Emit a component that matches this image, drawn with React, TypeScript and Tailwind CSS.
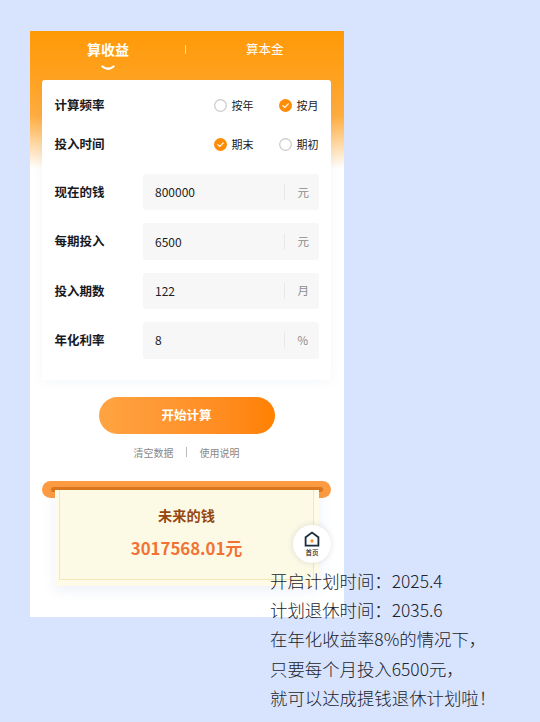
import type { ReactNode } from "react";

const fields = [
  { label: "现在的钱", value: "800000", unit: "元" },
  { label: "每期投入", value: "6500", unit: "元" },
  { label: "投入期数", value: "122", unit: "月" },
  { label: "年化利率", value: "8", unit: "%" },
];

const notes = [
  "开启计划时间：2025.4",
  "计划退休时间：2035.6",
  "在年化收益率8%的情况下，",
  "只要每个月投入6500元，",
  "就可以达成提钱退休计划啦！",
];

function Label({ children }: { children: ReactNode }) {
  return <span className="w-[88px] shrink-0 text-[12.5px] font-bold text-[#17191f]">{children}</span>;
}

function Radio({ label, checked }: { label: string; checked?: boolean }) {
  return (
    <span className="flex items-center gap-[5px] text-[11px] text-[#222]">
      <svg viewBox="0 0 13 13" className="mt-px size-[13px]" fill="none">
        {checked ? (
          <>
            <circle cx="6.5" cy="6.5" r="6.5" fill="#ff8c05" />
            <path d="M3.8 6.7 5.8 8.5 9.3 4.8" stroke="#fff" strokeWidth="1.1" strokeLinecap="round" />
          </>
        ) : (
          <circle cx="6.5" cy="6.5" r="5.8" fill="#fff" stroke="#cacaca" strokeWidth="1.2" />
        )}
      </svg>
      {label}
    </span>
  );
}

function RadioRow({ label, options, active }: { label: string; options: string[]; active: number }) {
  return (
    <div className="flex h-[38.5px] items-center">
      <Label>{label}</Label>
      <div className="ml-auto flex gap-[25px] pb-px">
        {options.map((o, i) => (
          <Radio key={o} label={o} checked={i === active} />
        ))}
      </div>
    </div>
  );
}

function HomeButton() {
  return (
    <div className="absolute top-[494px] left-[263.5px] flex size-[38px] flex-col items-center rounded-full bg-white pt-[6px] shadow-[0_0_6px_rgba(60,70,110,0.16)]">
      <svg viewBox="0 0 16 16" className="size-[16px]" fill="none">
        <path d="M1.6 6.2 8 1.5 14.4 6.2V14.6H1.6Z" stroke="#1b2a3c" strokeWidth="1.8" />
        <rect x="6.6" y="8.6" width="2.8" height="3" rx="0.8" fill="#ff8a20" />
      </svg>
      <span className="mt-px text-[6.5px] leading-[9px] font-medium text-[#222]">首页</span>
    </div>
  );
}

export default function App() {
  return (
    <div className="relative h-[722px] w-[540px] overflow-hidden bg-[#d8e3fe] pt-[31px] pl-[29.5px] font-['Noto_Sans_CJK_SC',sans-serif]">
      <main className="relative flex h-[586px] w-[314px] flex-col overflow-hidden bg-white bg-[linear-gradient(180deg,#ff9906_0px,#ffa323_52px,#ffad40_85px,#ffd7a0_112px,#ffffff_138px)] px-[12.5px]">
        <nav className="flex h-[49px] shrink-0 items-start pt-[8px] text-white">
          <div className="flex w-[132px] flex-col items-center">
            <span className="text-[14px] leading-[20px] font-bold">算收益</span>
            <svg viewBox="0 0 14 6" className="mt-[6px] h-[6px] w-[14px]" fill="none">
              <path d="M1.5 1.5Q7 6 12.5 1.5" stroke="#fff" strokeWidth="2.2" strokeLinecap="round" />
            </svg>
          </div>
          <span className="mt-[6px] ml-[11px] h-[9px] w-px bg-[#ffd797]" />
          <span className="ml-[60px] text-[12.5px] leading-[20px]">算本金</span>
        </nav>

        <section className="h-[300px] shrink-0 rounded-[3px] bg-white px-[12.5px] pt-[6.5px] shadow-[0_2px_12px_rgba(70,100,130,0.06)]">
          <RadioRow label="计算频率" options={["按年", "按月"]} active={1} />
          <RadioRow label="投入时间" options={["期末", "期初"]} active={0} />
          <div className="mt-[10.5px] flex flex-col gap-[13px]">
            {fields.map((f) => (
              <div key={f.label} className="flex h-[36.4px] items-center">
                <Label>{f.label}</Label>
                <div className="flex h-full flex-1 items-center rounded-[3px] bg-[#f7f7f7] pl-[12.5px]">
                  <span className="text-[12px] text-[#222]">{f.value}</span>
                  <span className="ml-auto h-[16px] w-px bg-[#e8e8e8]" />
                  <span className="w-[34px] pl-[13px] text-[11.5px] text-[#8c8c8c]">{f.unit}</span>
                </div>
              </div>
            ))}
          </div>
        </section>

        <button className="mt-[17px] h-[37px] w-[176px] shrink-0 self-center rounded-full bg-linear-to-r from-[#ffa442] to-[#ff8100] text-[12.5px] font-bold text-white">
          开始计算
        </button>

        <div className="mt-[11px] flex h-[14px] shrink-0 items-center justify-center gap-[12.5px] text-[10px] text-[#888]">
          <span>清空数据</span>
          <span className="h-[10px] w-px bg-[#bbb]" />
          <span>使用说明</span>
        </div>

        <section className="mt-[22px]">
          <div className="flex h-[17px] flex-col rounded-full bg-[#fc9b42] px-[8.5px] pt-[6px]">
            <div className="h-[5px] rounded-full bg-[#dc771c]" />
          </div>
          <div className="relative mx-[12.5px] -mt-[8px] h-[96px] bg-[#fffbe8] px-[4.5px] shadow-[0_4px_12px_rgba(80,110,190,0.10)]">
            <div className="flex h-[90px] flex-col items-center border-x border-b border-[#f3e8b8] bg-[#fcfae5] pt-[15px]">
              <h2 className="text-[14.2px] leading-[20px] font-bold text-[#97460f]">未来的钱</h2>
              <p className="mt-[11px] text-[16.8px] leading-[24px] font-bold text-[#f17234]">3017568.01元</p>
            </div>
          </div>
        </section>

        <HomeButton />
      </main>

      <aside className="absolute top-[566px] left-[270px] text-[17.4px] leading-[29.2px] font-light whitespace-nowrap text-[#20232b]">
        {notes.map((n) => (
          <p key={n}>{n}</p>
        ))}
      </aside>
    </div>
  );
}
